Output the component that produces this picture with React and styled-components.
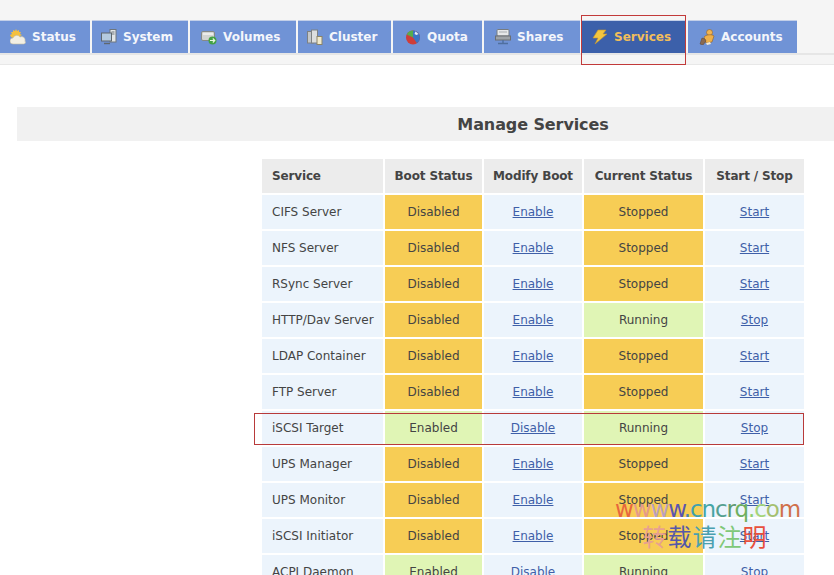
import React from "react";
import styled, { createGlobalStyle } from "styled-components";

const tabs = [
  { name: "Status", icon: "status", width: 90, pad: 10 },
  { name: "System", icon: "system", width: 96, pad: 9 },
  { name: "Volumes", icon: "volumes", width: 106, pad: 11 },
  { name: "Cluster", icon: "cluster", width: 93, pad: 9 },
  { name: "Quota", icon: "quota", width: 89, pad: 12 },
  { name: "Shares", icon: "shares", width: 96, pad: 11 },
  { name: "Services", icon: "services", width: 104, pad: 10, active: true },
  { name: "Accounts", icon: "accounts", width: 109, pad: 11 },
];

const services = [
  ["CIFS Server", false, false],
  ["NFS Server", false, false],
  ["RSync Server", false, false],
  ["HTTP/Dav Server", false, true],
  ["LDAP Container", false, false],
  ["FTP Server", false, false],
  ["iSCSI Target", true, true],
  ["UPS Manager", false, false],
  ["UPS Monitor", false, false],
  ["iSCSI Initiator", false, false],
  ["ACPI Daemon", true, true],
];

const watermarkTop = [
  ["w", "#e8663c"], ["w", "#e59a8a"], ["w", "#b9a0c0"], ["w", "#5a55b0"], [".", "#4a7fb0"],
  ["c", "#3fa0b0"], ["n", "#45a5a5"], ["c", "#55a090"], ["r", "#5f9a70"], ["q", "#6fb060"],
  [".", "#8fcf70"], ["c", "#a5d57a"], ["o", "#a5c070"], ["m", "#d0704a"],
];

const watermarkBottom = [
  ["转", "#e8a090"], ["载", "#5558a8"], ["请", "#4aa0b0"], ["注", "#80c878"], ["明", "#e8503c"],
];

const icons = {
  status: (
    <>
      <path d="M6 0l1 2 2-1 0 2 2 0-1 2 2 1-2 1 1 2H3L1 8 0 6l2-1-1-2 2 0 0-2 2 1z" fill="#f3c03f" />
      <path d="M3 15a3 3 0 0 1 0-6 4 4 0 0 1 7-1 3.5 3.5 0 0 1 5 4 2 2 0 0 1-1 3z" fill="#f2efe4" stroke="#c4bda2" strokeWidth="0.6" />
    </>
  ),
  system: (
    <>
      <rect x="9" y="0.5" width="6" height="12.5" fill="#e3e6e8" stroke="#6f767c" />
      <path d="M10.5 3h3M10.5 5h3" stroke="#6f767c" />
      <rect x="0.5" y="4" width="10" height="8" fill="#b4cadf" stroke="#5f676e" />
      <path d="M3 14.5h6" stroke="#5f676e" strokeWidth="1.4" />
    </>
  ),
  volumes: (
    <>
      <rect x="0.5" y="2.5" width="13" height="9" rx="1.5" fill="#d2d4d2" stroke="#858987" />
      <path d="M2 5h10" stroke="#f7f7f5" strokeWidth="1.4" />
      <circle cx="11.5" cy="11.5" r="4" fill="#43a145" />
      <path d="M9 11.5h4.5m-1.7-2 2 2-2 2" stroke="#eaf8e2" strokeWidth="1.1" fill="none" />
    </>
  ),
  cluster: (
    <>
      <rect x="0.5" y="2.5" width="6" height="11.5" fill="#c4c7c9" stroke="#7d8184" />
      <rect x="4.5" y="1" width="6" height="13" fill="#dcdedf" stroke="#7d8184" />
      <rect x="10" y="7.5" width="5" height="8" fill="#f0e9cc" stroke="#8b8468" />
    </>
  ),
  quota: (
    <>
      <circle cx="8" cy="8.5" r="7" fill="#cf3d39" />
      <path d="M8 8.5V1.5a7 7 0 0 1 7 7 7 7 0 0 1-3 5.7z" fill="#3d74c4" />
      <path d="M8 8.5 1.8 5.5A7 7 0 0 1 8 1.5z" fill="#55ad4e" />
      <path d="M10.5 2.5l3 2.5-2 1-2-1z" fill="#e9eef6" />
    </>
  ),
  shares: (
    <>
      <rect x="2" y="0.5" width="12" height="6.5" rx="1" fill="#e6e8e9" stroke="#777c80" />
      <path d="M4 3h8" stroke="#a9adb0" />
      <rect x="0.5" y="7" width="15" height="4" fill="#9ea3a7" stroke="#6a6f73" />
      <path d="M8 11v3.5M3 14.5h10" stroke="#4f6f9f" strokeWidth="1.4" />
    </>
  ),
  services: (
    <path d="M6 1h8l-3 4h4L3 15l3-6H1z" fill="#f3c63f" stroke="#c8962a" strokeWidth="0.6" />
  ),
  accounts: (
    <>
      <circle cx="10.5" cy="3.5" r="3" fill="#f0b452" stroke="#8f5f2a" strokeWidth="0.6" />
      <path d="M5 8c2-2.5 8-3 10-1l-2 6-6 1z" fill="#eeb04a" stroke="#8f5f2a" strokeWidth="0.6" />
      <path d="M1 15l2-6 3 1 1 2-3 4z" fill="#8a6a50" stroke="#5f4432" strokeWidth="0.5" />
      <path d="M7 14l4-1 1 2-4 1z" fill="#f7ecd2" />
    </>
  ),
};

const GlobalStyle = createGlobalStyle`
  html, body {
    margin: 0;
    height: 575px;
    overflow: hidden;
    background: #fff;
  }
  body {
    font-family: "DejaVu Sans", Verdana, sans-serif;
    font-size: 12px;
    color: #444;
  }
`;

const Page = styled.div`
  position: relative;
  width: 1066px;
  height: 575px;
  overflow: hidden;
`;

const TopBand = styled.header`
  height: 65px;
  padding-top: 20px;
  box-sizing: border-box;
  background: #f5f5f5;
  border-bottom: 1px solid #e8e8e8;
`;

const TabRow = styled.nav`
  display: flex;
  height: 33px;
  gap: 2px;
  border-bottom: 2px solid #e6e6e6;
`;

const Tab = styled.a`
  position: relative;
  display: flex;
  align-items: center;
  flex: none;
  box-sizing: border-box;
  gap: 6px;
  width: ${(p) => p.$width}px;
  height: 33px;
  padding: 0 0 1px ${(p) => p.$pad}px;
  border-top: 1px solid #c3cfe8;
  background: ${(p) => (p.$active ? "#3c60aa" : "#7093d6")};
  color: ${(p) => (p.$active ? "#f2be5a" : "#f4f6fb")};
  font-weight: bold;
  font-size: 12px;
`;

const TabMarker = styled.span`
  position: absolute;
  inset: -6px 0 -12px -1px;
  border: 1px solid #c23a3a;
`;

const TabIcon = styled.svg`
  width: 16px;
  height: 16px;
  flex: none;
`;

const Title = styled.h1`
  width: 1032px;
  height: 34px;
  box-sizing: border-box;
  padding-top: 1px;
  margin: 42px 0 16px 17px;
  background: #f1f1f1;
  font-size: 16px;
  letter-spacing: -0.1px;
  line-height: 33px;
  text-align: center;
  color: #444;
`;

const TableWrap = styled.div`
  position: relative;
  width: 546px;
  margin: 0 auto;
`;

const ServiceTable = styled.table`
  width: 546px;
  table-layout: fixed;
  border-collapse: separate;
  border-spacing: 2px;
  font-size: 12px;
`;

const HeadCell = styled.th`
  height: 34px;
  padding: 0 0 1px ${(p) => (p.$left ? 10 : 0)}px;
  box-sizing: border-box;
  background: #ececec;
  font-size: 12px;
  letter-spacing: -0.15px;
  text-align: ${(p) => (p.$left ? "left" : "center")};
  color: #444;
`;

const NameCell = styled.td`
  height: 34px;
  padding: 0 0 0 10px;
  background: #ecf4fc;
  white-space: nowrap;
`;

const StateCell = styled.td`
  height: 34px;
  padding: 0;
  text-align: center;
  background: ${(p) => (p.$good ? "#e0f5b5" : "#f7cd55")};
`;

const LinkCell = styled.td`
  height: 34px;
  padding: 0;
  text-align: center;
  background: #ecf4fc;
`;

const ActionLink = styled.a`
  color: #3f5fa8;
  text-decoration: underline;
`;

const RowMarker = styled.div`
  position: absolute;
  left: -6px;
  top: 256px;
  width: 548px;
  height: 30px;
  border: 1px solid #b83a3a;
`;

const Watermark = styled.div`
  position: absolute;
  left: 615px;
  top: 494px;
  width: 180px;
  text-align: center;
  white-space: nowrap;
`;

const WatermarkLine = styled.div`
  font-size: ${(p) => p.$size}px;
  line-height: ${(p) => p.$line}px;
  letter-spacing: ${(p) => p.$spacing}px;
  font-family: "DejaVu Sans", "Noto Sans CJK SC", sans-serif;
`;

const WatermarkChar = styled.span`
  color: ${(p) => p.$color};
`;

const App = () => {
  return (
    <Page>
      <GlobalStyle />
      <TopBand>
        <TabRow>
          {tabs.map((tab) => (
            <Tab key={tab.name} $width={tab.width} $active={tab.active} $pad={tab.pad}>
              <TabIcon viewBox="0 0 16 16">{icons[tab.icon]}</TabIcon>
              {tab.name}
              {tab.active && <TabMarker />}
            </Tab>
          ))}
        </TabRow>
      </TopBand>
      <Title>Manage Services</Title>
      <TableWrap>
        <ServiceTable>
          <colgroup>
            <col style={{ width: 121 }} />
            <col style={{ width: 97 }} />
            <col style={{ width: 98 }} />
            <col style={{ width: 119 }} />
            <col style={{ width: 99 }} />
          </colgroup>
          <thead>
            <tr>
              <HeadCell $left>Service</HeadCell>
              <HeadCell>Boot Status</HeadCell>
              <HeadCell>Modify Boot</HeadCell>
              <HeadCell>Current Status</HeadCell>
              <HeadCell>Start / Stop</HeadCell>
            </tr>
          </thead>
          <tbody>
            {services.map(([name, enabled, running]) => (
              <tr key={name}>
                <NameCell>{name}</NameCell>
                <StateCell $good={enabled}>{enabled ? "Enabled" : "Disabled"}</StateCell>
                <LinkCell>
                  <ActionLink>{enabled ? "Disable" : "Enable"}</ActionLink>
                </LinkCell>
                <StateCell $good={running}>{running ? "Running" : "Stopped"}</StateCell>
                <LinkCell>
                  <ActionLink>{running ? "Stop" : "Start"}</ActionLink>
                </LinkCell>
              </tr>
            ))}
          </tbody>
        </ServiceTable>
        <RowMarker />
      </TableWrap>
      <Watermark>
        <WatermarkLine $size={23} $line={30} $spacing={-1.1}>
          {watermarkTop.map(([ch, color], index) => (
            <WatermarkChar key={index} $color={color}>{ch}</WatermarkChar>
          ))}
        </WatermarkLine>
        <WatermarkLine $size={24} $line={28} $spacing={1}>
          {watermarkBottom.map(([ch, color], index) => (
            <WatermarkChar key={index} $color={color}>{ch}</WatermarkChar>
          ))}
        </WatermarkLine>
      </Watermark>
    </Page>
  );
};

export default App;
